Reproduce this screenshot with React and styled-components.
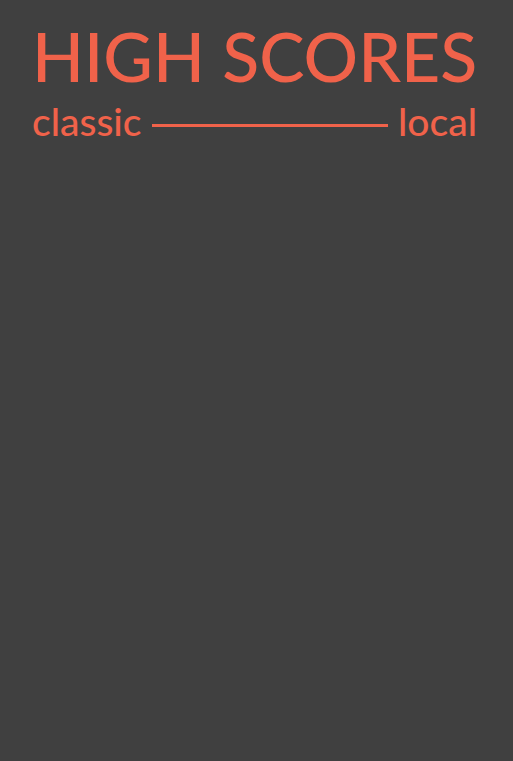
import React from "react";
import styled, { createGlobalStyle } from "styled-components";

const Global = createGlobalStyle`
  html, body { margin: 0; padding: 0; background: #404040; }
  body { font-family: "Lato", "Noto Sans", sans-serif; }
`;

const Page = styled.div`
  min-height: 761px;
  background: #404040;
  color: #f0624a;
  padding: 20px 33px 0 32px;
  box-sizing: border-box;
`;

const Header = styled.header`
  width: 445px;
  display: flex;
  flex-direction: column;
`;

const Title = styled.h1`
  margin: 0;
  font-family: "Lato", sans-serif;
  font-weight: 500;
  font-size: 68px;
  line-height: 72px;
  letter-spacing: 0px;
  white-space: nowrap;
`;

const SubRow = styled.div`
  display: flex;
  align-items: center;
  gap: 10px;
  margin-top: 7px;
  font-size: 39px;
  font-weight: 500;
  line-height: 44px;
`;

const Label = styled.span`
  white-space: nowrap;
`;

const Rule = styled.div`
  flex: 1;
  height: 3px;
  background: #f0624a;
  margin-top: 9px;
`;

export default function App() {
  return (
    <Page>
      <Global />
      <Header>
        <Title>HIGH SCORES</Title>
        <SubRow>
          <Label>classic</Label>
          <Rule />
          <Label>local</Label>
        </SubRow>
      </Header>
    </Page>
  );
}
